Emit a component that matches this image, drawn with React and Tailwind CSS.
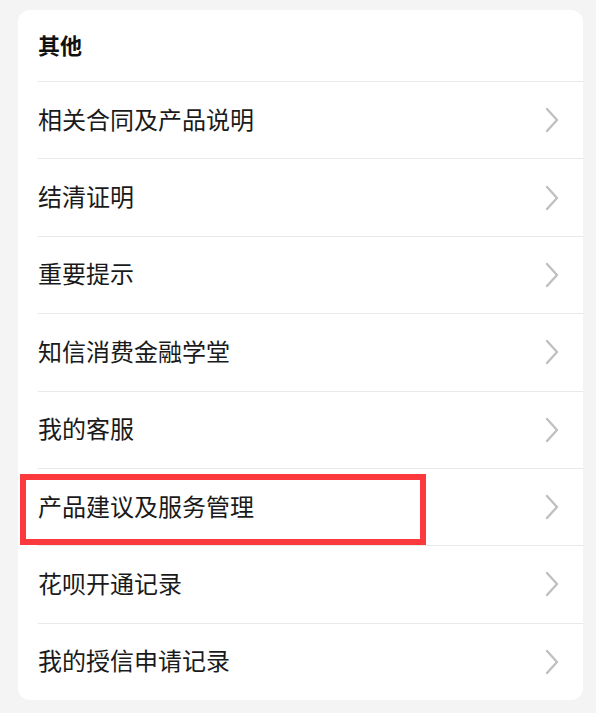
import React from "react";

const items = [
    "相关合同及产品说明",
    "结清证明",
    "重要提示",
    "知信消费金融学堂",
    "我的客服",
    "产品建议及服务管理",
    "花呗开通记录",
    "我的授信申请记录",
];

const Chevron = () => (
    <svg width="16" height="26" viewBox="0 0 16 26" fill="none">
        <path d="M3 2 L13 13 L3 24" stroke="#c0c0c0" strokeWidth="2.4" strokeLinecap="round" strokeLinejoin="round" />
    </svg>
);

const App = () => {
    return (
        <div
            className="h-[713px] w-[596px] bg-[#f4f4f4] pt-[10px] pl-[18px] pr-[13px]"
            style={{ fontFamily: '"Noto Sans CJK SC", "Noto Sans", sans-serif' }}
        >
            <div className="relative bg-white rounded-[12px] overflow-hidden">
                <div className="h-[71px] flex items-center pl-[20px] pb-[3px]">
                    <span className="text-[22px] font-bold text-[#111]">其他</span>
                </div>
                {items.map((label, i) => (
                    <div key={label} className="relative ml-[20px] border-t border-[#e9e9e9] h-[77.375px] flex items-center justify-between pr-[23px]">
                        <span className="text-[24px] text-[#1a1a1a] leading-none -mt-[3px]">{label}</span>
                        <Chevron />
                        {i === 5 && (
                            <div className="absolute left-[-18px] top-[5px] w-[406px] h-[71px] border-[6px] border-[#fc3a3e]" />
                        )}
                    </div>
                ))}
            </div>
        </div>
    );
};

export default App;
